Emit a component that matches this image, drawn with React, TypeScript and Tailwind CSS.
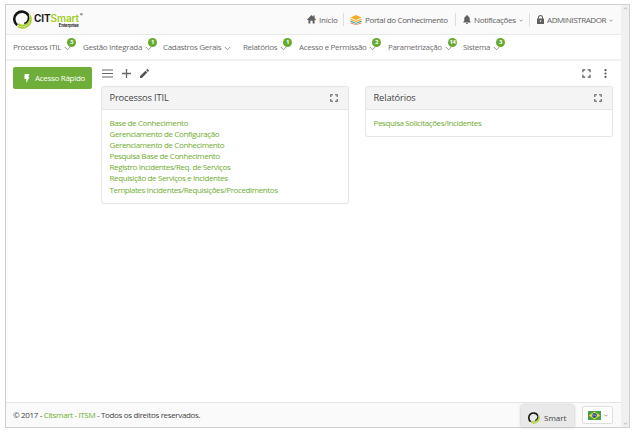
import React from 'react';

const menu = [
  { label: 'Processos ITIL', badge: '3', width: 'w-[70px]', text: 'w-[50px]' },
  { label: 'Gestão Integrada', badge: '1', width: 'w-[80px]', text: 'w-[61px]' },
  { label: 'Cadastros Gerais', badge: '', width: 'w-[80px]', text: 'w-[60px]' },
  { label: 'Relatórios', badge: '1', width: 'w-[56px]', text: 'w-[36px]' },
  { label: 'Acesso e Permissão', badge: '2', width: 'w-[89px]', text: 'w-[69px]' },
  { label: 'Parametrização', badge: '14', width: 'w-[75px]', text: 'w-[56px]' },
  { label: 'Sistema', badge: '3', width: 'w-[50px]', text: 'w-[29px]' },
];

const processes = [
  'Base de Conhecimento',
  'Gerenciamento de Configuração',
  'Gerenciamento de Conhecimento',
  'Pesquisa Base de Conhecimento',
  'Registro Incidentes/Req. de Serviços',
  'Requisição de Serviços e Incidentes',
  'Templates Incidentes/Requisições/Procedimentos',
];

function Chevron({ className = '', color = '#888' }: { className?: string; color?: string }) {
  return (
    <svg className={className} viewBox="0 0 7 5" fill="none" stroke={color} strokeWidth="0.9">
      <path d="M.8 1 3.5 3.8 6.2 1" />
    </svg>
  );
}

function Expand({ className }: { className: string }) {
  return (
    <svg className={className} viewBox="0 0 10 10" fill="none" stroke="#555" strokeWidth="1.3">
      <path d="M1 3.6V1h2.6M6.4 1H9v2.6M9 6.4V9H6.4M3.6 9H1V6.4" />
    </svg>
  );
}

function Swirl({ className }: { className: string }) {
  return (
    <svg className={className} viewBox="0 0 20 20" fill="none">
      <path d="M5 17.3A9 9 0 0 0 19 9.8c0-1.6-.5-3.2-1.3-4.4" stroke="#a3cd27" strokeWidth="1.6" />
      <path d="M5.5 14.8A6.9 6.9 0 0 0 16.7 8" stroke="#a3cd27" strokeWidth="2" />
      <path d="M4.4 16A8 8 0 1 1 16.2 5.6" stroke="#151515" strokeWidth="2.7" />
      <path d="M15.4 4.6c2.4 4 .2 8.6-3.6 9.6" stroke="#151515" strokeWidth="1.7" />
    </svg>
  );
}

function Panel({ title, items, body }: { title: string; items: string[]; body: string }) {
  return (
    <section className="w-[248px] overflow-hidden rounded-[3px] border border-[#e6e6e6] bg-white shadow-[0_0_1px_#eeeeee]">
      <header className="flex h-[23px] items-center justify-between border-b border-[#e5e5e5] bg-[#f4f4f4] pl-2 pr-[10px]">
        <h2 className="text-[9.3px] leading-[12px] tracking-[-0.14px] text-[#444]">{title}</h2>
        <Expand className="size-[8px]" />
      </header>
      <ul className={`pl-2 pt-[7px] text-[8px] leading-[11.1px] tracking-[-0.38px] text-[#6fae31] ${body}`}>
        {items.map((item) => (
          <li key={item} className="whitespace-nowrap">{item}</li>
        ))}
      </ul>
    </section>
  );
}

export default function App() {
  return (
    <div className="h-[432px] w-[632px] overflow-hidden bg-white pl-[5px] pt-[4px] font-['Open_Sans','Noto_Sans',sans-serif]">
      <div className="flex h-[424px] w-[625px] border border-[#cfcfcf] bg-white">
        <div className="flex w-[615px] flex-col">
          <header className="flex h-[30px] shrink-0 items-center border-b border-[#e9e9e9] bg-[#fafafa] text-[8px] tracking-[-0.36px] text-[#606060]">
            <div className="ml-[7px] flex w-[294px] items-center">
              <Swirl className="size-[19px]" />
              <div className="ml-[2px] mt-[1px] font-['Inter',sans-serif]">
                <div className="flex h-[10px] items-center text-[10px] font-bold leading-[10px] tracking-[-0.1px] text-[#191919]">
                  CIT<span className="font-semibold text-[#a0cc24]">Smart</span>
                  <span className="mb-[6px] ml-[1px] text-[4px] leading-none">®</span>
                </div>
                <div className="h-[5px] pr-[4px] text-right text-[4.2px] font-bold leading-[5px] tracking-[-0.15px] text-[#222]">Enterprise</div>
              </div>
            </div>
            <div className="flex w-[36px] items-center">
              <svg className="mr-[3px] size-[9px]" viewBox="0 0 16 16" fill="#606060">
                <path d="M8 0 0 8l1.3 1.3L2.5 8v7H6v-5h4v5h3.5V8l1.2 1.3L16 8l-2.5-2.5V1H11v2z" />
              </svg>
              <span className="tracking-[-0.2px]">Início</span>
            </div>
            <div className="flex h-[13px] w-[112px] items-center border-l border-[#dedede] pl-[6px]">
              <svg className="mr-[3px] h-[10px] w-[12px]" viewBox="0 0 24 20" fill="none">
                <path d="m1 5 11-5 11 5-11 5z" fill="#f3ad28" />
                <path d="m1 7 11 5 11-5v2.5l-11 5L1 9.500z" fill="#f3ad28" />
                <path d="m1 11 11 5 11-5v2.500l-11 4L1 13.500z" fill="#26a18c" />
                <path d="m1 15 11 4 11-4v1.500L12 20 1 16.500z" fill="#e5533b" />
              </svg>
              <span className="whitespace-nowrap">Portal do Conhecimento</span>
            </div>
            <div className="flex h-[13px] w-[74px] items-center border-l border-[#dedede] pl-[7px]">
              <svg className="mr-[3px] h-[9px] w-[8px]" viewBox="0 0 16 18" fill="#606060">
                <path d="M8 0c1 0 1.5.7 1.5 2 2.5.7 4 2.8 4 5.5V12l2 2v1H.5v-1l2-2V7.5C2.5 4.8 4 2.7 6.5 2 6.5.7 7 0 8 0M6 16h4c0 2.5-4 2.5-4 0" />
              </svg>
              <span className="tracking-[-0.33px]">Notificações</span>
              <Chevron className="ml-[3px] mt-[1px] h-[3px] w-[4px]" color="#444" />
            </div>
            <div className="flex h-[13px] items-center border-l border-[#dedede] pl-[7px]">
              <svg className="mr-[3px] h-[9px] w-[7px]" viewBox="0 0 14 18" fill="#606060">
                <path fillRule="evenodd" d="M2 7V5a5 5 0 0 1 10 0v2h2v11H0V7zm2 0h6V5a3 3 0 0 0-6 0zM7 10.5a1.6 1.6 0 1 0 0 3.2 1.6 1.6 0 0 0 0-3.2" />
              </svg>
              <span className="tracking-[-0.4px]">ADMINISTRADOR</span>
              <Chevron className="ml-[3px] mt-[1px] h-[3px] w-[4px]" color="#444" />
            </div>
          </header>
          <nav className="flex h-[26px] shrink-0 items-center border-b-2 border-[#f1f1f1] pl-[7px] text-[8px] tracking-[-0.32px] text-[#6c6c6c]">
            {menu.map((item) => (
              <div key={item.label} className={`flex shrink-0 items-center ${item.width}`}>
                <span className={`-mt-px shrink-0 whitespace-nowrap ${item.text}`}>{item.label}</span>
                <span className="relative ml-[1px] mt-[2px] flex">
                  <Chevron className="h-[5px] w-[7px]" />
                  {item.badge && (
                    <b className="absolute -top-[8px] left-[3px] flex size-[9px] items-center justify-center rounded-full bg-[#67aa30] text-[6px] leading-none text-white">
                      {item.badge}
                    </b>
                  )}
                </span>
              </div>
            ))}
          </nav>
          <main className="flex min-h-0 flex-1 pl-[7px] pt-[6px]">
            <button className="flex h-[22px] w-[79px] shrink-0 items-center rounded-[2px] bg-[#6eae39] pl-[11px] text-[8px] tracking-[-0.3px] text-white">
              <svg className="mr-[5px] h-[9px] w-[6px]" viewBox="0 0 10 18" fill="white">
                <path d="M0 0h10L7.5 6H10L3.5 18V10H0z" />
              </svg>
              Acesso Rápido
            </button>
            <div className="ml-[8.5px] w-[512px]">
              <div className="flex h-[19px] items-start pt-[2px]">
                <svg className="ml-[1.5px] h-[9px] w-[11px]" viewBox="0 0 11 9" stroke="#666" strokeWidth="1.2">
                  <path d="M0 1h11M0 4.5h11M0 8h11" />
                </svg>
                <svg className="ml-[9px] size-[9px]" viewBox="0 0 9 9" stroke="#666" strokeWidth="1.3">
                  <path d="M4.5 0v9M0 4.5h9" />
                </svg>
                <svg className="ml-[9px] size-[9px]" viewBox="0 0 18 18" fill="#555">
                  <path d="M0 14.2V18h3.8L14.7 7.1l-3.8-3.8zM17.7 4.1a1 1 0 0 0 0-1.4L15.3.3a1 1 0 0 0-1.4 0L12 2.2 15.8 6z" />
                </svg>
                <Expand className="ml-[432.5px] size-[9px]" />
                <svg className="ml-[13px] h-[9px] w-[3px]" viewBox="0 0 3 9" fill="#555">
                  <circle cx="1.5" cy="1.2" r="1.1" />
                  <circle cx="1.5" cy="4.5" r="1.1" />
                  <circle cx="1.5" cy="7.8" r="1.1" />
                </svg>
              </div>
              <div className="flex items-start gap-4">
                <Panel title="Processos ITIL" items={processes} body="h-[93px]" />
                <Panel title="Relatórios" items={['Pesquisa Solicitações/Incidentes']} body="h-[26px]" />
              </div>
            </div>
          </main>
          <footer className="flex h-[25px] shrink-0 items-center border-t border-[#e4e4e4] bg-[#fafafa] pl-[7px] text-[8px] tracking-[-0.34px] text-[#444]">
            <p className="-mt-px w-[508px]">© 2017 - <span className="text-[#6fae31]">Citsmart - ITSM</span> - Todos os direitos reservados.</p>
            <div className="flex h-[22px] w-[53px] shrink-0 items-center self-end rounded-t-[3px] bg-[#e9e9e9] pl-[7px] shadow-[0_0_3px_#b5b5b5]">
              <Swirl className="mr-[4px] mt-[3px] size-[12px]" />
              <span className="mt-[3px] text-[8px] tracking-normal">Smart</span>
            </div>
            <div className="ml-[8px] flex h-[18px] w-[31px] shrink-0 items-center rounded-[2px] border border-[#dedede] bg-white pl-[5px]">
              <svg className="h-[9px] w-[13px]" viewBox="0 0 13 9">
                <path d="M0 0h13v9H0z" fill="#44a044" />
                <path d="m.8 4.5 5.7-4 5.7 4-5.7 4z" fill="#ead33c" />
                <circle cx="6.5" cy="4.5" r="2.4" fill="#254da2" />
                <path d="M4.3 3.9q2.4-.4 4.3 1.4" fill="none" stroke="white" strokeWidth=".5" />
              </svg>
              <Chevron className="ml-[3px] h-[3px] w-[4px]" color="#444" />
            </div>
          </footer>
        </div>
        <aside className="flex w-[8px] flex-col items-center justify-between bg-[#f0f0f0] py-[2px]">
          <Chevron className="h-[3px] w-[5px] rotate-180" />
          <Chevron className="h-[3px] w-[5px]" />
        </aside>
      </div>
    </div>
  );
}
